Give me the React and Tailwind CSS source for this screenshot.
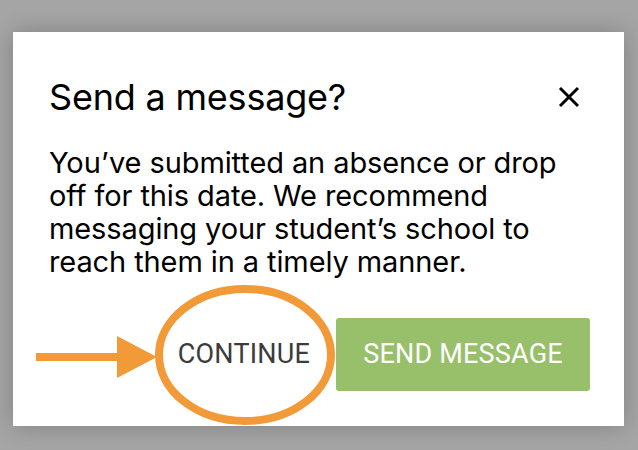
import React from 'react';

const App = () => {
  return (
    <div className="w-[638px] h-[450px] bg-[#a5a5a5] pt-[32px] pl-[13px] overflow-hidden" style={{ fontFamily: 'Inter, "Liberation Sans", sans-serif' }}>
      <div className="relative w-[611px] h-[394px] bg-white shadow-[0_0_22px_rgba(0,0,0,0.22)] pl-[36px] pr-[34px] pt-[43px]">
        <div className="flex items-center justify-between">
          <h1 className="text-[36px] leading-[44px] text-black font-normal tracking-[-0.2px]">Send a message?</h1>
          <button className="w-[24px] h-[24px] mr-[9px] flex items-center justify-center">
            <svg width="22" height="22" viewBox="0 0 22 22">
              <path d="M2 2 L20 20 M20 2 L2 20" stroke="#000" strokeWidth="3" strokeLinecap="butt" />
            </svg>
          </button>
        </div>
        <p className="mt-[27px] w-[535px] text-[29px] leading-[33px] text-black tracking-[-0.1px]">
          You’ve submitted an absence or drop off for this date. We recommend messaging your student’s school to reach them in a timely manner.
        </p>
        <div className="flex justify-end items-center mt-[40px] gap-[26px]" style={{ fontFamily: 'Roboto, "Liberation Sans", sans-serif' }}>
          <button className="text-[27px] text-[#3c3c3c] tracking-[0.2px]">CONTINUE</button>
          <button className="w-[254px] h-[73px] bg-[#98bf6a] rounded-[3px] text-white text-[27px] tracking-[0.2px]">SEND MESSAGE</button>
        </div>

        {/* annotation: orange ring and arrow */}
        <svg className="absolute left-0 top-0 pointer-events-none" width="611" height="394">
          <ellipse cx="232" cy="323" rx="86" ry="66" fill="none" stroke="#f29a38" strokeWidth="8" />
          <rect x="23" y="321" width="84" height="8" fill="#f29a38" />
          <polygon points="104,304 144,325 104,346" fill="#f29a38" />
        </svg>
      </div>
    </div>
  );
};

export default App;
